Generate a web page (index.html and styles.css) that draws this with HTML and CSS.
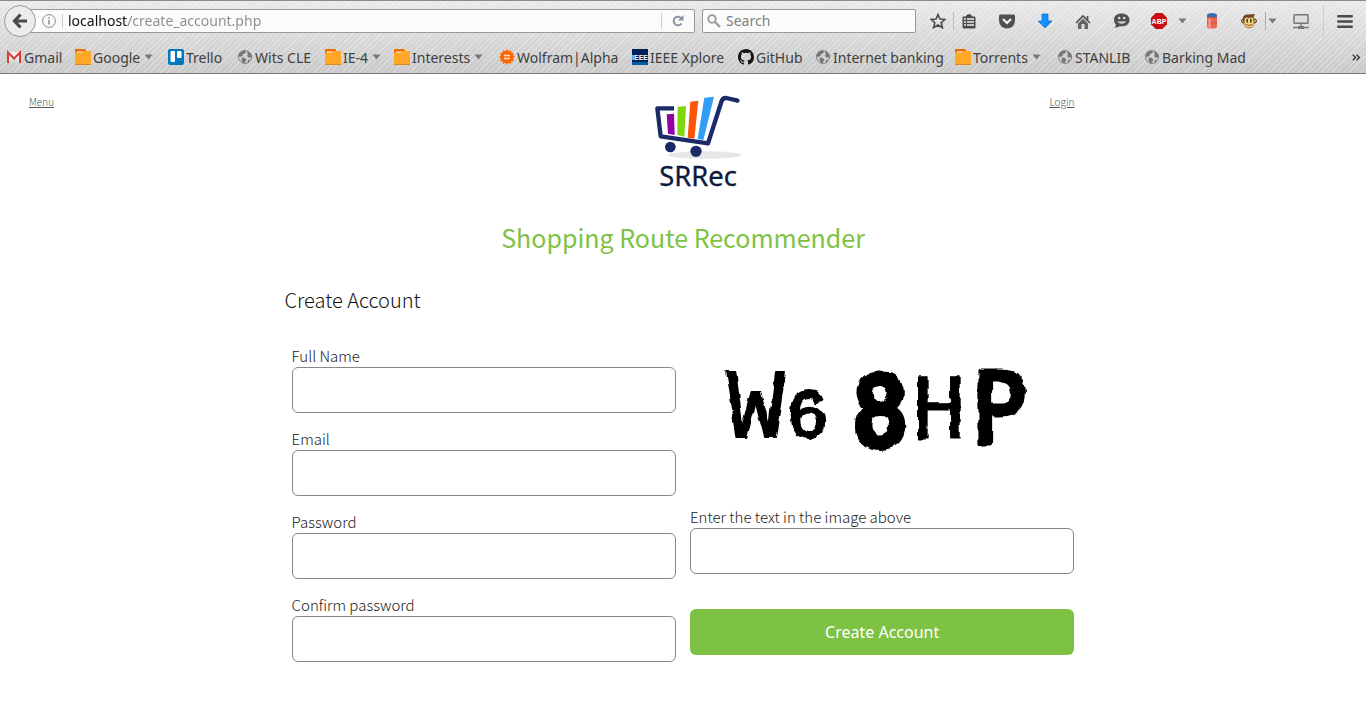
FILE: index.html
```html
<!DOCTYPE html>
<html lang="en">
<head>
<meta charset="utf-8">
<title>Create Account</title>
<link rel="stylesheet" href="styles.css">
</head>
<body>
<svg class="defs" aria-hidden="true">
  <symbol id="folder" viewBox="0 0 16 16"><path d="M0 0h10l1 1v4H0z" fill="#ef6c00"/><path d="M0 4l2-1h4l1-1h9v13.500H0V4z" fill="#ffa726"/><path d="M2 3h5" stroke="#fff"/><path d="M0 15.500h16" stroke="#d98c1b"/></symbol>
  <symbol id="globe" viewBox="0 0 16 16"><circle cx="8" cy="8" r="6.500" fill="#d2d2d2" stroke="#858585"/><path d="M3 3l4-1.500 2 1-1 2-2 .5-.5 2-2.500 1-2-1zM9.500 3l2-.5 3 3.500.5 3-2-1-1 1-2-2 1-2zM5 8.500l3 .5 1.500 2-1.500 2v1.500L5 13l-.5-2.500zM11 11l2-.5-1 2.500-1.500 1z" fill="#777"/></symbol>
  <symbol id="caret" viewBox="0 0 9 6"><path d="M.5.5h8l-4 5z" fill="#777"/></symbol>
</svg>

<header class="browser">
  <div class="navbar">
    <button class="back" aria-label="Back"><svg width="16" height="16" viewBox="0 0 16 16"><path d="M8.500 1.500L2.500 8l6 6.500M3 8h12" fill="none" stroke="#4a4a4a" stroke-width="3.200"/></svg></button>
    <div class="address">
      <button class="info" aria-label="Site information"><svg width="14" height="14" viewBox="0 0 14 14"><circle cx="7" cy="7" r="6.400" fill="none" stroke="#8b8b8b"/><path d="M7 6v4.500M7 3.200v1.600" stroke="#8b8b8b" stroke-width="1.500"/></svg></button>
      <input class="url" type="text" aria-label="Address" value="localhost/create_account.php">
      <button class="reload" aria-label="Reload"><svg width="12" height="12" viewBox="0 0 12 12"><path d="M9.500 8.500A4.300 4.300 0 1 1 9.500 3.500" fill="none" stroke="#8796a5" stroke-width="2"/><path d="M11.500 0v5.500H6z" fill="#8796a5"/></svg></button>
    </div>
    <div class="search">
      <svg width="14" height="14" viewBox="0 0 14 14"><circle cx="5" cy="5" r="3.800" fill="none" stroke="#999" stroke-width="1.800"/><path d="M8 8l5 5" stroke="#999" stroke-width="2.200"/></svg>
      <input type="text" aria-label="Search" placeholder="Search">
    </div>
    <div class="tools">
      <button aria-label="Bookmark this page"><svg width="16" height="16" viewBox="0 0 16 16"><path d="M8 1.500l2 4.500 5 .4-3.800 3.300 1.200 5L8 12l-4.400 2.700 1.200-5L1 6.400 6 6z" fill="none" stroke="#4a4a4a" stroke-width="1.600"/></svg></button>
      <button class="ruled" aria-label="Show bookmarks"><svg width="14" height="15" viewBox="0 0 14 15"><path d="M4 3c0-3 6-3 6 0h3v11H1V3z" fill="#4a4a4a" stroke="#4a4a4a" stroke-linejoin="round"/><path d="M2 5h2M5 5h7M2 8h2M5 8h7M2 11h2M5 11h7" stroke="#eee" stroke-width="1.500"/></svg></button>
      <button aria-label="Pocket"><svg width="16" height="15" viewBox="0 0 16 15"><path d="M1.500.5h13q1.500 0 1.500 1.500v4.500a8 8 0 0 1-16 0V2Q0 .5 1.500.5z" fill="#505050"/><path d="M4 5l4 4 4-4" fill="none" stroke="#f2f2f2" stroke-width="2.200"/></svg></button>
      <button aria-label="Downloads"><svg width="16" height="16" viewBox="0 0 16 16"><path d="M5 1h6v7h4l-7 7-7-7h4z" fill="#1590ff" stroke="#0b69c7" stroke-width=".7"/></svg></button>
      <button aria-label="Home"><svg width="16" height="15" viewBox="0 0 16 15"><path d="M1 9l7-7 7 7M12.500 2v4" fill="none" stroke="#555" stroke-width="1.700"/><path d="M3 9.500l5-5 5 5V15H9.500v-5h-3v5H3z" fill="#666"/></svg></button>
      <button aria-label="Chat"><svg width="17" height="16" viewBox="0 0 17 16"><path d="M8.500.5C4 .5 1 3 1 7q0 3 2 4.500Q3 14 .5 14.500q4 .5 6-1.300C12 14 16.500 11.500 16.500 7c0-4-3.500-6.500-8-6.500z" fill="#505050"/><circle cx="6.200" cy="5" r="1.300" fill="#ddd"/><circle cx="11.200" cy="5" r="1.300" fill="#ddd"/><path d="M4 8.500h9.500Q9 13 4 8.500z" fill="#ddd"/></svg></button>
      <button aria-label="Adblock Plus"><svg width="16" height="16" viewBox="0 0 16 16"><path d="M4.700 0h6.600L16 4.700v6.600L11.300 16H4.700L0 11.300V4.700z" fill="#c70d12"/><text class="abp" x="8" y="10.500" text-anchor="middle">ABP</text></svg></button>
      <button class="arrow" aria-label="Adblock Plus menu"><svg width="9" height="6"><use href="#caret"/></svg></button>
      <button class="wide" aria-label="Clear cache"><svg width="12" height="16" viewBox="0 0 12 16"><rect x="1" y="1" width="10" height="14.500" rx="2.500" fill="#ee6754"/><path d="M1 4V2.500Q1 0 6 0t5 2.500V4z" fill="#356eae"/><path d="M1 4.500h10M1 10h10" stroke="#c9503f"/><path d="M3.500 5.500v9" stroke="#ff9c88" stroke-width="2"/></svg></button>
      <button class="narrow" aria-label="Greasemonkey"><svg width="16" height="16" viewBox="0 0 16 16"><circle cx="2.500" cy="8" r="2" fill="#e9b568" stroke="#633b16"/><circle cx="13.500" cy="8" r="2" fill="#e9b568" stroke="#633b16"/><path d="M2 8C1 3 4 1 7 1.500L14 1l-1.500 3Q14 6 13.500 9L12 13q-4 3-8 0z" fill="#74451b"/><path d="M3.500 5q2.500-1.500 4.500 0 2.500-1.500 4.500 0l.5 6q-1 4-5 4t-5-4z" fill="#f6cf80" stroke="#8a5c2c" stroke-width=".7"/><path d="M6.200 6v3.500M9.800 6v3.500" stroke="#20491b" stroke-width="1.500"/><path d="M5 11.500q3 2 6 0" fill="none" stroke="#8a5c2c"/></svg></button>
      <button class="arrow split" aria-label="Greasemonkey menu"><svg width="9" height="6"><use href="#caret"/></svg></button>
      <button class="monitor" aria-label="Network"><svg width="16" height="15" viewBox="0 0 16 15"><rect x="1" y=".8" width="14" height="8.500" rx=".5" fill="#ddd" stroke="#777" stroke-width="1.500"/><path d="M8 9v4M0 13.500h5M11 13.500h5" stroke="#777" stroke-width="1.500"/><rect x="5" y="12" width="6" height="3" fill="#777"/></svg></button>
      <button class="menu" aria-label="Open menu"><svg width="16" height="13" viewBox="0 0 16 13"><path d="M1.300 1.300h13.400M1.300 6.500h13.400M1.300 11.700h13.400" stroke="#4a4a4a" stroke-width="2.600" stroke-linecap="round"/></svg></button>
    </div>
  </div>
  <nav class="bookmarks" aria-label="Bookmarks">
    <a href="#"><svg width="16" height="16" viewBox="0 0 16 16"><path d="M2 3h12v11H2z" fill="#eee"/><path d="M2 14l6-6 6 6z" fill="#d8d8d8"/><path d="M2 14V3.500l6 6 6-6V14" fill="none" stroke="#da3c34" stroke-width="2"/></svg>Gmail</a>
    <a href="#"><svg width="16" height="16"><use href="#folder"/></svg>Google<svg class="caret" width="9" height="6"><use href="#caret"/></svg></a>
    <a href="#"><svg width="16" height="16" viewBox="0 0 16 16"><rect width="16" height="16" rx="2" fill="#0079bf"/><rect x="2.500" y="2" width="4.500" height="11" rx="1" fill="#fff"/><rect x="9" y="2" width="4.500" height="7" rx="1" fill="#fff"/></svg>Trello</a>
    <a href="#"><svg width="16" height="16"><use href="#globe"/></svg>Wits CLE</a>
    <a href="#"><svg width="16" height="16"><use href="#folder"/></svg>IE-4<svg class="caret" width="9" height="6"><use href="#caret"/></svg></a>
    <a href="#"><svg width="16" height="16"><use href="#folder"/></svg>Interests<svg class="caret" width="9" height="6"><use href="#caret"/></svg></a>
    <a href="#"><svg width="16" height="16" viewBox="0 0 16 16"><path d="M8 0l1.600 2.200L12 1l.3 2.700L15 4l-1 2.400L16 8l-2 1.600 1 2.400-2.700.3L12 15l-2.400-1.200L8 16l-1.600-2.200L4 15l-.3-2.700L1 12l1-2.400L0 8l2-1.600L1 4l2.700-.3L4 1l2.400 1.200z" fill="#ff6600"/><path d="M5 6.500h6M5 9.500h6" stroke="#ffe1cc" stroke-width="1.400"/></svg>Wolfram|Alpha</a>
    <a href="#"><svg width="16" height="16" viewBox="0 0 16 16"><rect width="16" height="16" fill="#001f5c"/><path d="M0 13h16v3H0z" fill="#0060a8"/><text class="ieee" x="8" y="11" text-anchor="middle">IEEE</text></svg>IEEE Xplore</a>
    <a href="#"><svg width="16" height="16" viewBox="0 0 16 16"><path fill="#141414" d="M8 0C3.580 0 0 3.580 0 8c0 3.540 2.290 6.530 5.470 7.590.4.070.55-.17.55-.38 0-.19-.01-.82-.01-1.490-2.010.37-2.530-.49-2.690-.94-.09-.23-.48-.94-.82-1.130-.28-.15-.68-.52-.01-.53.63-.01 1.080.58 1.230.82.72 1.210 1.870.87 2.330.66.070-.52.280-.87.510-1.070-1.780-.2-3.640-.89-3.640-3.950 0-.87.310-1.590.82-2.150-.08-.2-.36-1.020.08-2.120 0 0 .67-.21 2.200.82a7.600 7.600 0 0 1 4 0c1.530-1.040 2.200-.82 2.200-.82.44 1.100.16 1.920.08 2.120.51.560.82 1.270.82 2.150 0 3.070-1.870 3.750-3.650 3.950.29.250.54.730.54 1.480 0 1.070-.01 1.930-.01 2.200 0 .21.150.46.550.38A8.010 8.010 0 0 0 16 8c0-4.420-3.580-8-8-8z"/></svg>GitHub</a>
    <a href="#"><svg width="16" height="16"><use href="#globe"/></svg>Internet banking</a>
    <a href="#"><svg width="16" height="16"><use href="#folder"/></svg>Torrents<svg class="caret" width="9" height="6"><use href="#caret"/></svg></a>
    <a href="#"><svg width="16" height="16"><use href="#globe"/></svg>STANLIB</a>
    <a href="#"><svg width="16" height="16"><use href="#globe"/></svg>Barking Mad</a>
    <button class="more" aria-label="More bookmarks"><svg width="8" height="7" viewBox="0 0 8 7"><path d="M.7.7l2.800 2.800L.7 6.300M4.500.7l2.800 2.800-2.800 2.800" fill="none" stroke="#222" stroke-width="1.200"/></svg></button>
  </nav>
</header>

<main class="page">
  <div class="masthead">
    <a class="link menu-link" href="#">Menu</a>
    <svg class="logo" width="120" height="110" viewBox="-51 0 360 330" role="img" aria-label="SRRec">
      <ellipse cx="194" cy="210" rx="111" ry="11" fill="#e6e6e6"/>
      <path d="M80 88l22-2 2 64-20-4z" fill="#9400a3"/>
      <path d="M113 65l25-2-5 92-21-5z" fill="#80d60a"/>
      <path d="M151 50l24-3-12 114-20-3z" fill="#fb5607"/>
      <path d="M193 38l29-3-32 130-17-3z" fill="#319df5"/>
      <path d="M102 70H52l10 84 142 21 41-127q4-10 14-9l34 8" fill="none" stroke="#1d2a68" stroke-width="13" stroke-linejoin="round"/>
      <circle cx="293" cy="47" r="6" fill="#1d2a68"/>
      <circle cx="91" cy="186" r="16" fill="#1d2a68"/><circle cx="168" cy="199" r="17" fill="#1d2a68"/>
      <text class="logo-name" x="174" y="302" text-anchor="middle">SRRec</text>
    </svg>
    <a class="link login-link" href="#">Login</a>
  </div>
  <h1>Shopping Route Recommender</h1>
  <section class="account">
    <h2>Create Account</h2>
    <form>
      <div class="column">
        <div class="field"><label for="name">Full Name</label><input id="name" type="text"></div>
        <div class="field"><label for="email">Email</label><input id="email" type="email"></div>
        <div class="field"><label for="password">Password</label><input id="password" type="password"></div>
        <div class="field"><label for="confirm">Confirm password</label><input id="confirm" type="password"></div>
      </div>
      <div class="column">
        <svg class="captcha" viewBox="690 347 384 161" role="img" aria-label="Captcha">
          <filter id="rough" x="-5%" y="-10%" width="110%" height="120%"><feTurbulence type="fractalNoise" baseFrequency=".08" numOctaves="2" seed="4"/><feDisplacementMap in="SourceGraphic" scale="6" xChannelSelector="R" yChannelSelector="G"/></filter>
          <g class="scrawl" filter="url(#rough)">
            <text x="726" y="438" font-size="98" stroke-width="2">W</text>
            <text x="787" y="438" font-size="68" stroke-width="3">6</text>
            <text class="heavy" x="853" y="446" font-size="94" stroke-width="8">8</text>
            <text x="911" y="439" font-size="92" stroke-width="1">H</text>
            <text class="heavy" x="972" y="444" font-size="98" stroke-width="5">P</text>
          </g>
        </svg>
        <div class="field"><label for="captcha">Enter the text in the image above</label><input id="captcha" type="text"></div>
        <button class="submit" type="submit">Create Account</button>
      </div>
    </form>
  </section>
</main>
</body>
</html>
```
FILE: styles.css
```css
* { box-sizing: border-box; }
body { margin: 0; background: #fff; color: #222; font-family: "Noto Sans CJK SC", sans-serif; }
button { border: 0; padding: 0; background: none; font: inherit; }
svg { display: block; flex: none; }
.defs { position: absolute; width: 0; height: 0; }

/* Browser toolbar */
.browser {
  border-top: 1px solid #8d8d8d;
  border-bottom: 1px solid #777;
  background: repeating-linear-gradient(135deg, rgba(255,255,255,.3) 0 1px, transparent 1px 4px), linear-gradient(#e9e9e9, #c9c9c9);
  font-family: "Noto Sans", sans-serif;
  font-size: 14px;
  color: #404040;
}
.navbar { display: flex; align-items: center; height: 40px; padding-left: 4px; }
.back {
  z-index: 1;
  display: grid; place-items: center;
  width: 32px; height: 32px;
  border: 1px solid #999; border-radius: 50%;
  background: #ececec;
}
.address, .search {
  display: flex; align-items: center;
  height: 24px;
  border: 1px solid #999; border-radius: 2px;
  background: #fbfbfb;
}
.address { flex: 1; margin-left: -12px; padding-left: 17px; }
.address input, .search input {
  flex: 1; min-width: 0; padding: 0;
  border: 0; outline: 0; background: none;
  font: inherit; line-height: 20px;
}
.info { padding-right: 6px; border-right: 1px solid #ccc; }
.address .url {
  margin-left: 5px;
  color: transparent;
  background: linear-gradient(90deg, #111 60px, #8c8c8c 60px);
  background-clip: text;
}
.reload { display: grid; place-items: center; width: 33px; height: 16px; border-left: 1px solid #ccc; }
.search { width: 214px; margin: 0 6px 0 7px; padding-left: 4px; gap: 5px; }
.search input::placeholder { color: #808080; opacity: 1; }
.tools { display: flex; align-items: center; }
.tools button { display: flex; align-items: center; justify-content: center; width: 38px; height: 18px; }
.tools button:first-child { width: 31px; }
.tools .ruled { width: 35px; padding-right: 4px; border-left: 1px solid #bbb; }
.tools .arrow { width: 8px; }
.tools .wide { width: 52px; }
.tools .narrow { width: 22px; }
.tools .split { width: 14px; margin-left: 5px; border-left: 1px solid #aaa; }
.tools .monitor { width: 45px; height: 32px; border-right: 1px solid #ccc; }
.tools .menu { width: 42px; }
.abp { font: bold 7px "Liberation Sans", sans-serif; fill: #fff; }
.ieee { font: bold 7px "Liberation Sans", sans-serif; fill: #fff; }

.bookmarks {
  display: grid;
  grid-template-columns: 69px 93px 69px 88px 69px 105px 133px 106px 77px 140px 102px 87px 1fr 20px;
  align-items: center;
  height: 32px;
  padding-left: 6px;
}
.bookmarks a { display: flex; align-items: center; gap: 2px; color: inherit; text-decoration: none; white-space: nowrap; }
.caret { margin-left: 2px; }
.more { display: grid; place-items: center; }

/* Page */
.masthead { display: grid; grid-template-columns: 5fr 14fr 5fr; padding-top: 11px; }
.link { margin-top: 9px; font-size: 10px; line-height: 16px; font-weight: 300; color: #555; align-self: start; }
.menu-link { margin-left: 29px; justify-self: start; }
.logo { grid-area: 1 / 2; justify-self: center; }
.login-link { grid-area: 1 / 2; justify-self: end; margin-right: 7px; }
.logo-name { font: 82px "Noto Sans", sans-serif; fill: #0b1b3d; stroke: #0b1b3d; stroke-width: 1px; }
h1 { margin: 22px 0 0; text-align: center; font-size: 25px; line-height: 40px; font-weight: 400; color: #7dc242; }
.account { display: grid; width: calc(100% * 7 / 12); margin: 0 auto; }
h2 { margin: 27px 0 0; font-size: 20px; line-height: 32px; font-weight: 300; color: #111; }
form { display: grid; grid-template-columns: 1fr 1fr; gap: 14px; padding: 30px 7px; }
.field { display: grid; margin-bottom: 16px; }
.field label { padding-bottom: 1px; font-size: 15px; line-height: 20px; font-weight: 300; }
.field input { width: 100%; height: 46px; padding: 0 12px; border: 1px solid #888; border-radius: 6px; background: #fff; font: inherit; }
.captcha { width: 100%; height: 161px; overflow: visible; }
.scrawl { font-family: "Liberation Mono", monospace; fill: #000; stroke: #000; stroke-linejoin: round; }
.heavy { font-family: "DejaVu Sans Condensed", "DejaVu Sans", sans-serif; }
.submit {
  width: 100%; height: 46px; margin-top: 19px;
  border-radius: 6px; background: #7dc242; color: #fff;
  font-family: "Noto Sans", sans-serif; font-size: 16px;
}
```
